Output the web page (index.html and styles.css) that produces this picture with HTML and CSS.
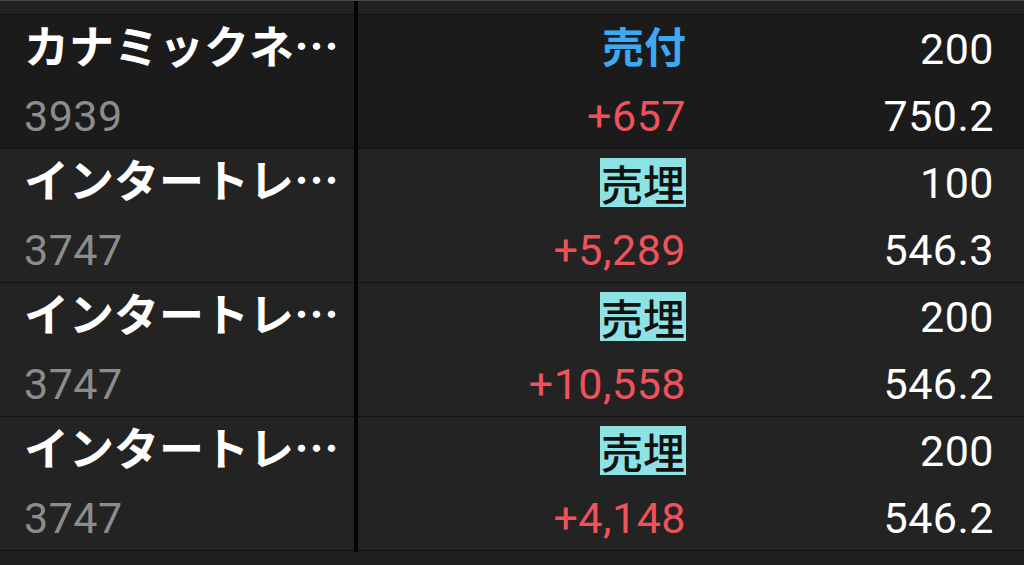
FILE: index.html
```html
<!DOCTYPE html>
<html lang="ja">
<head>
<meta charset="utf-8">
<title>保有一覧</title>
<link rel="stylesheet" href="styles.css">
</head>
<body>
<div class="table">
  <div class="row row--head">
    <div class="cell"></div>
    <div class="divider"></div>
    <div class="cell"></div>
    <div class="cell"></div>
  </div>

  <div class="row row--dark">
    <div class="cell name-cell">
      <div class="line name">カナミックネ…</div>
      <div class="line code">3939</div>
    </div>
    <div class="divider"></div>
    <div class="cell mid">
      <div class="line line--cjk"><span class="side side--buy">売付</span></div>
      <div class="line pl">+657</div>
    </div>
    <div class="cell right">
      <div class="line num">200</div>
      <div class="line num">750.2</div>
    </div>
  </div>

  <div class="row">
    <div class="cell name-cell">
      <div class="line name">インタートレ…</div>
      <div class="line code">3747</div>
    </div>
    <div class="divider"></div>
    <div class="cell mid">
      <div class="line"><span class="side side--close">売埋</span></div>
      <div class="line pl">+5,289</div>
    </div>
    <div class="cell right">
      <div class="line num">100</div>
      <div class="line num">546.3</div>
    </div>
  </div>

  <div class="row">
    <div class="cell name-cell">
      <div class="line name">インタートレ…</div>
      <div class="line code">3747</div>
    </div>
    <div class="divider"></div>
    <div class="cell mid">
      <div class="line"><span class="side side--close">売埋</span></div>
      <div class="line pl">+10,558</div>
    </div>
    <div class="cell right">
      <div class="line num">200</div>
      <div class="line num">546.2</div>
    </div>
  </div>

  <div class="row">
    <div class="cell name-cell">
      <div class="line name">インタートレ…</div>
      <div class="line code">3747</div>
    </div>
    <div class="divider"></div>
    <div class="cell mid">
      <div class="line"><span class="side side--close">売埋</span></div>
      <div class="line pl">+4,148</div>
    </div>
    <div class="cell right">
      <div class="line num">200</div>
      <div class="line num">546.2</div>
    </div>
  </div>

  <div class="footer"></div>
</div>
</body>
</html>
```

FILE: styles.css
```css
html, body {
  margin: 0;
  padding: 0;
}

body {
  width: 1024px;
  height: 565px;
  overflow: hidden;
  background: #1f1f1f;
  font-family: Roboto, "Noto Sans CJK JP", sans-serif;
  color: #ffffff;
}

.table {
  display: flex;
  flex-direction: column;
}

.row {
  display: grid;
  grid-template-columns: 354px 4px 328px 1fr;
  height: 133px;
  background: #232323;
  border-bottom: 1px solid #121212;
}

.row--head {
  height: 13px;
  background: #212121;
  border-top: 1px solid #4a4a4a;
}

.row--dark {
  background: #1b1b1b;
}

.divider {
  background: #050505;
  margin-bottom: -1px;
}

.cell {
  display: flex;
  flex-direction: column;
}

.line {
  height: 67px;
  box-sizing: border-box;
  display: flex;
  align-items: center;
  white-space: nowrap;
}

.name-cell {
  padding-left: 24px;
}

.name-cell .line {
  justify-content: flex-start;
}

.name {
  font-family: "Noto Sans CJK JP", sans-serif;
  font-weight: 700;
  font-size: 45px;
  color: #ffffff;
  padding-bottom: 9px;
}

.line--cjk {
  padding-bottom: 8px;
}

.code {
  font-size: 43px;
  letter-spacing: 0.5px;
  color: #8c8c8c;
}

.mid .line,
.right .line {
  justify-content: flex-end;
}

.right {
  padding-right: 30px;
}

.num {
  font-size: 43px;
  letter-spacing: 0.5px;
  color: #ffffff;
}

.pl {
  font-size: 43px;
  letter-spacing: 0.5px;
  color: #f0525b;
}

.side {
  font-family: "Noto Sans CJK JP", sans-serif;
  font-size: 42px;
  line-height: 49px;
}

.side--buy {
  color: #3fa8f2;
  font-weight: 700;
}

.side--close {
  display: inline-block;
  height: 49px;
  padding: 0 1px;
  background: #8de2e4;
  color: #111111;
  font-weight: 500;
}

.footer {
  flex: 1;
  height: 16px;
  background: #1f1f1f;
}
```
